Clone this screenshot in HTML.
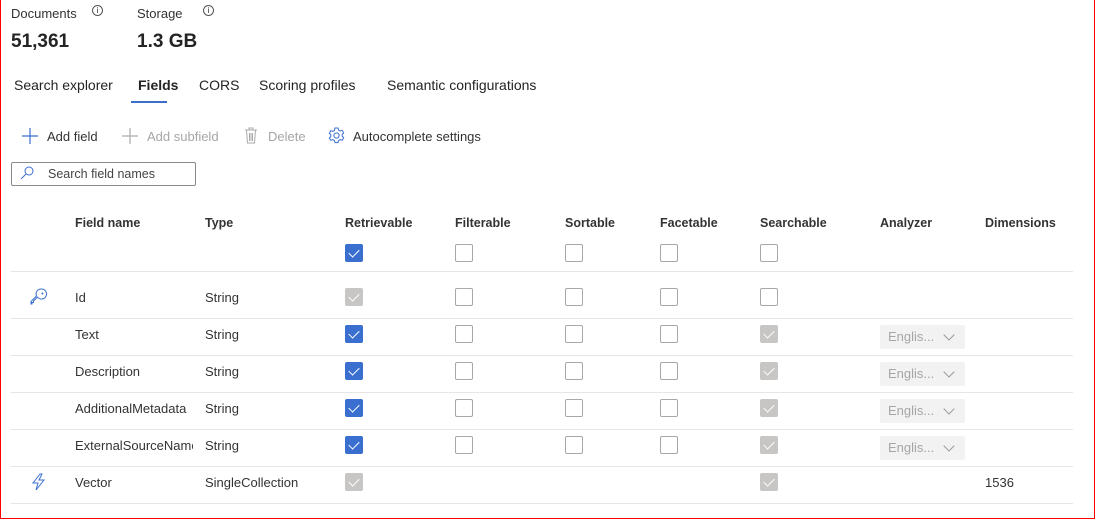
<!DOCTYPE html>
<html><head><style>
*{box-sizing:border-box;margin:0;padding:0}
body{width:1095px;height:519px;overflow:hidden;background:#fff;font-family:"Liberation Sans",sans-serif;color:#242424;position:relative}
.frame{position:absolute;left:0;top:0;width:1095px;height:519px;border:1px solid #f00;border-top:none}
.a{position:absolute;white-space:nowrap}
.t{font-size:13px;color:#333}
.cb{position:absolute;width:18px;height:18px;border:1px solid #a8a8a8;border-radius:2px;background:#fff}
.cb.on{background:#3a6fd0;border-color:#3a6fd0}
.cb.dis{background:#c8c6c4;border-color:#c8c6c4}
.cb.on::after,.cb.dis::after{content:"";position:absolute;left:5px;top:2px;width:5px;height:9px;border:solid #fff;border-width:0 1.2px 1.2px 0;transform:rotate(45deg)}
.line{position:absolute;left:11px;width:1062px;height:1px;background:#e6e6e6}
.dd{position:absolute;left:880px;width:85px;height:24px;background:#f2f2f2;border-radius:2px;color:#a6a6a6;font-size:13px;padding:4px 0 0 8px}
.dd::after{content:"";position:absolute;right:12px;top:6px;width:7px;height:7px;border:solid #999;border-width:0 1px 1px 0;transform:rotate(45deg)}
.h{font-size:12.5px;font-weight:bold;top:216px;color:#333}
.info{position:absolute;width:11px;height:11px;border:1px solid #555;border-radius:50%;font-size:8px;text-align:center;line-height:9px}
</style></head><body>
<div class="frame"></div>
<div class="a t" style="left:11px;top:6px">Documents</div>
<div class="info" style="left:92px;top:5px">i</div>
<div class="a t" style="left:137px;top:6px">Storage</div>
<div class="info" style="left:203px;top:5px">i</div>
<div class="a" style="left:11px;top:31px;font-size:19px;font-weight:bold">51,361</div>
<div class="a" style="left:137px;top:31px;font-size:19px;font-weight:bold">1.3 GB</div>
<div class="a" style="left:14px;top:77px;font-size:14px">Search explorer</div>
<div class="a" style="left:138px;top:77px;font-size:14px;font-weight:bold">Fields</div>
<div class="a" style="left:131px;top:101px;width:36px;height:2px;background:#3a6fd0"></div>
<div class="a" style="left:199px;top:77px;font-size:14px">CORS</div>
<div class="a" style="left:259px;top:77px;font-size:14px">Scoring profiles</div>
<div class="a" style="left:387px;top:77px;font-size:14px">Semantic configurations</div>
<svg class="a" style="left:22px;top:128px" width="16" height="16"><path d="M8 0v16M0 8h16" stroke="#3a6fd0" stroke-width="1.2"/></svg>
<div class="a t" style="left:47px;top:129px">Add field</div>
<svg class="a" style="left:122px;top:128px" width="16" height="16"><path d="M8 0v16M0 8h16" stroke="#aaa" stroke-width="1.2"/></svg>
<div class="a t" style="left:147px;top:129px;color:#a6a6a6">Add subfield</div>
<svg class="a" style="left:244px;top:127px" width="14" height="17"><path d="M1 3h12M5 3V1h4v2M2.5 3l1 13h7l1-13M5.5 6v8M7 6v8M8.5 6v8" stroke="#aaa" fill="none"/></svg>
<div class="a t" style="left:268px;top:129px;color:#a6a6a6">Delete</div>
<svg class="a" style="left:328px;top:127px" width="17" height="17" viewBox="0 0 17 17"><circle cx="8.5" cy="8.5" r="2.6" stroke="#3a6fd0" fill="none"/><path d="M7 1h3l.5 2 1.7 1 2-.7 1.5 2.6-1.5 1.4v2l1.5 1.4-1.5 2.6-2-.7-1.7 1-.5 2H7l-.5-2-1.7-1-2 .7L1.3 11l1.5-1.4v-2L1.3 6.3 2.8 3.7l2 .7 1.7-1z" stroke="#3a6fd0" fill="none"/></svg>
<div class="a t" style="left:353px;top:129px">Autocomplete settings</div>
<div class="a" style="left:11px;top:162px;width:185px;height:24px;border:1px solid #8a8a8a;border-radius:2px"></div>
<svg class="a" style="left:20px;top:166px" width="14" height="14"><circle cx="9" cy="5" r="4" stroke="#3a6fd0" fill="none"/><path d="M6 8L1 13" stroke="#3a6fd0"/></svg>
<div class="a" style="left:48px;top:167px;font-size:12.5px;color:#444">Search field names</div>
<div class="a h" style="left:75px">Field name</div>
<div class="a h" style="left:205px">Type</div>
<div class="a h" style="left:345px">Retrievable</div>
<div class="a h" style="left:455px">Filterable</div>
<div class="a h" style="left:565px">Sortable</div>
<div class="a h" style="left:660px">Facetable</div>
<div class="a h" style="left:760px">Searchable</div>
<div class="a h" style="left:880px">Analyzer</div>
<div class="a h" style="left:985px">Dimensions</div>
<div class="cb on" style="left:345px;top:244px"></div>
<div class="cb" style="left:455px;top:244px"></div>
<div class="cb" style="left:565px;top:244px"></div>
<div class="cb" style="left:660px;top:244px"></div>
<div class="cb" style="left:760px;top:244px"></div>
<div class="line" style="top:271px"></div>
<div class="line" style="top:318px"></div>
<div class="line" style="top:355px"></div>
<div class="line" style="top:392px"></div>
<div class="line" style="top:429px"></div>
<div class="line" style="top:466px"></div>
<div class="line" style="top:503px"></div>
<svg class="a" style="left:30px;top:288px" width="18" height="18" viewBox="0 0 18 18"><path d="M11.5 1a5 5 0 1 1-4 8L3.5 13v1.5h-1.5v1.5H1v-2.5L6.5 8A5 5 0 0 1 11.5 1z" stroke="#3a6fd0" fill="none"/><circle cx="12.5" cy="5.5" r="1" fill="#3a6fd0"/></svg>
<svg class="a" style="left:31px;top:473px" width="16" height="18" viewBox="0 0 16 18"><path d="M9 1L2 10h5l-2 7 8-10H8l3-6z" stroke="#3a6fd0" fill="none"/></svg>
<div class="a t" style="left:75px;top:290px">Id</div><div class="a t" style="left:205px;top:290px">String</div>
<div class="a t" style="left:75px;top:327px">Text</div><div class="a t" style="left:205px;top:327px">String</div>
<div class="a t" style="left:75px;top:364px">Description</div><div class="a t" style="left:205px;top:364px">String</div>
<div class="a t" style="left:75px;top:401px;width:118px;overflow:hidden">AdditionalMetadata</div><div class="a t" style="left:205px;top:401px">String</div>
<div class="a t" style="left:75px;top:438px;width:118px;overflow:hidden">ExternalSourceName</div><div class="a t" style="left:205px;top:438px">String</div>
<div class="a t" style="left:75px;top:475px">Vector</div><div class="a t" style="left:205px;top:475px">SingleCollection</div>
<div class="a t" style="left:985px;top:475px">1536</div>

<div class="cb dis" style="left:345px;top:288px"></div>
<div class="cb" style="left:455px;top:288px"></div><div class="cb" style="left:565px;top:288px"></div><div class="cb" style="left:660px;top:288px"></div><div class="cb" style="left:760px;top:288px"></div>

<div class="cb on" style="left:345px;top:325px"></div>
<div class="cb" style="left:455px;top:325px"></div><div class="cb" style="left:565px;top:325px"></div><div class="cb" style="left:660px;top:325px"></div><div class="cb dis" style="left:760px;top:325px"></div>
<div class="dd" style="top:325px">Englis...</div>

<div class="cb on" style="left:345px;top:362px"></div>
<div class="cb" style="left:455px;top:362px"></div><div class="cb" style="left:565px;top:362px"></div><div class="cb" style="left:660px;top:362px"></div><div class="cb dis" style="left:760px;top:362px"></div>
<div class="dd" style="top:362px">Englis...</div>

<div class="cb on" style="left:345px;top:399px"></div>
<div class="cb" style="left:455px;top:399px"></div><div class="cb" style="left:565px;top:399px"></div><div class="cb" style="left:660px;top:399px"></div><div class="cb dis" style="left:760px;top:399px"></div>
<div class="dd" style="top:399px">Englis...</div>

<div class="cb on" style="left:345px;top:436px"></div>
<div class="cb" style="left:455px;top:436px"></div><div class="cb" style="left:565px;top:436px"></div><div class="cb" style="left:660px;top:436px"></div><div class="cb dis" style="left:760px;top:436px"></div>
<div class="dd" style="top:436px">Englis...</div>

<div class="cb dis" style="left:345px;top:473px"></div>
<div class="cb dis" style="left:760px;top:473px"></div>
</body></html>
